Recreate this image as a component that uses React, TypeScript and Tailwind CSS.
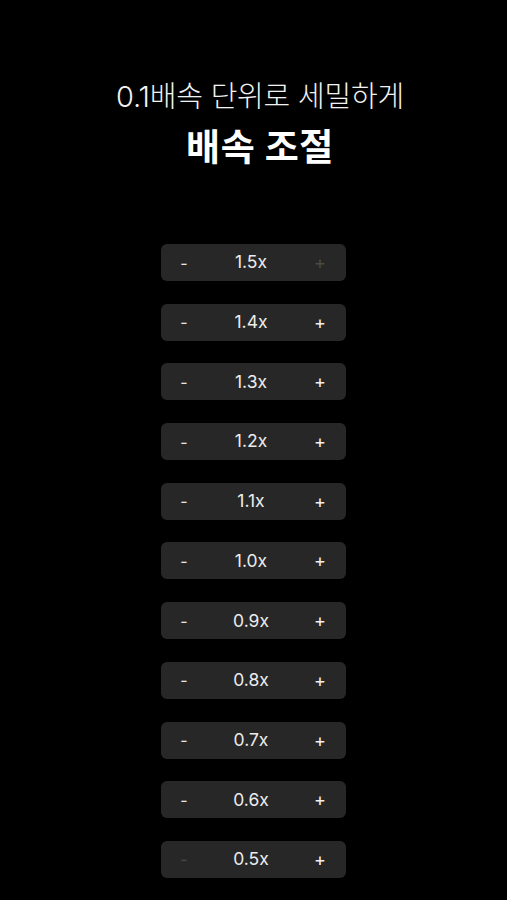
const speeds = ["1.5", "1.4", "1.3", "1.2", "1.1", "1.0", "0.9", "0.8", "0.7", "0.6", "0.5"];

function SpeedRow({ value }: { value: string }) {
  const isMax = value === "1.5";
  const isMin = value === "0.5";
  return (
    <div className="flex h-[37px] w-[185px] items-center justify-between rounded-[6px] bg-[#272727] pl-[17px] pr-[20px]">
      <span className={`w-[12px] text-center text-[16px] ${isMin ? "text-[#4a4a4a]" : "text-[#e6e6e6]"}`}>-</span>
      <span className="mr-[2px] text-[17.5px] text-[#ececec]">{value}x</span>
      <span className={`w-[12px] text-center text-[18px] ${isMax ? "text-[#4a4a4a]" : "text-[#f0f0f0]"}`}>+</span>
    </div>
  );
}

export default function App() {
  return (
    <div
      className="flex min-h-[900px] w-full flex-col items-center bg-black"
      style={{ fontFamily: 'Inter, "Noto Sans CJK KR", "Noto Sans", sans-serif' }}
    >
      <div className="flex flex-col items-center pl-[13px]">
        <div className="mt-[77px] text-[29px] font-light leading-[40px] tracking-[-0.2px] text-[#f2f2f2]">0.1배속 단위로 세밀하게</div>
        <div className="mt-[7px] text-[37px] font-bold leading-[48px] tracking-[0.6px] text-white">배속 조절</div>
      </div>
      <div className="mt-[72px] flex flex-col items-center gap-[22.7px]">
        {speeds.map((s) => (
          <SpeedRow key={s} value={s} />
        ))}
      </div>
    </div>
  );
}
